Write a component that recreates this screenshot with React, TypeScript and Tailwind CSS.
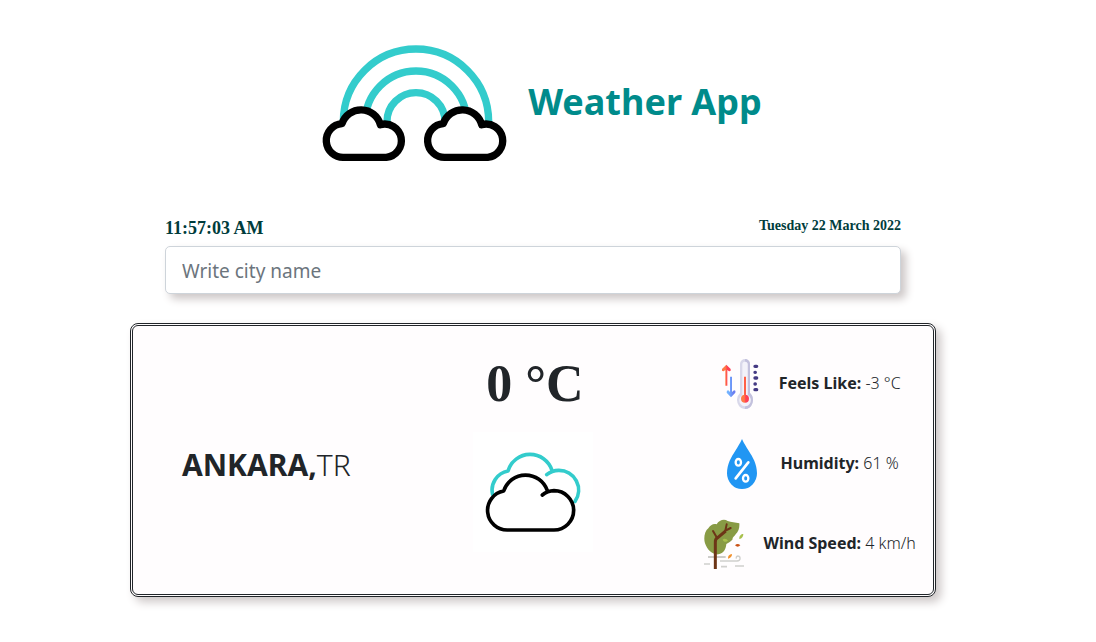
import type { ReactNode } from "react";

const miniCloud =
  "M100 382H226A50 50 0 1 0 208 284A60 60 0 0 0 93 281A50 50 0 0 0 100 382Z";

function RainbowLogo() {
  return (
    <svg className="size-[200px] shrink-0" viewBox="15 -81 600 600" fill="none" role="img" aria-label="Rainbow">
      <g stroke="#33cccc" strokeWidth="22">
        <path d="M97 290V275A218 218 0 0 1 533 275V290" />
        <path d="M163 275A152 152 0 0 1 467 275" />
        <path d="M228 290V275A87 87 0 0 1 402 275" />
      </g>
      <g stroke="#000" strokeWidth="22" strokeLinejoin="round" fill="#fff">
        <path d={miniCloud} />
        <path d={miniCloud} transform="translate(304 0)" />
      </g>
    </svg>
  );
}

function CloudsIcon() {
  return (
    <svg className="size-[120px] bg-white" viewBox="24 246 360 360" fill="none" strokeWidth="11" strokeLinecap="round" strokeLinejoin="round" role="img" aria-label="Cloudy">
      <g stroke="#33cccc">
        <path d="M83 434A58 58 0 0 1 129 363A69 69 0 0 1 261 361" />
        <path d="M245 374A59 59 0 0 1 281 361A59 59 0 0 1 330 454" />
      </g>
      <path
        stroke="#000"
        fill="#fff"
        d="M232 435A59 59 0 0 1 267 422A59 59 0 0 1 267 540H128A59 59 0 0 1 116 423A69 69 0 0 1 247 422"
      />
    </svg>
  );
}

function ThermometerIcon() {
  return (
    <svg className="size-[50px] shrink-0" viewBox="75 42 150 150" fill="none" aria-hidden="true">
      <defs>
        <linearGradient id="warm" x1="0" y1="0" x2="1" y2="0">
          <stop offset="0.4" stopColor="#ff7a45" />
          <stop offset="0.6" stopColor="#ff3f55" />
        </linearGradient>
        <linearGradient id="cool" x1="0" y1="0" x2="1" y2="0">
          <stop offset="0.2" stopColor="#73b4ff" />
          <stop offset="0.8" stopColor="#6a7cf0" />
        </linearGradient>
      </defs>
      <path fill="#d9d8ea" d="M150 57A15 15 0 0 1 180 57V144A24 27 0 1 1 150 144Z" />
      <path fill="#c3c1dd" d="M165 42A15 15 0 0 1 180 57V144A24 27 0 0 1 165 192V184A17 18 0 0 0 173 150V57A8 8 0 0 0 165 50Z" />
      <path fill="#f3f2fa" d="M157 58A8 8 0 0 1 173 58V150A17 18 0 1 1 157 150Z" />
      <path fill="#ff6048" d="M162 95H168V150H162Z" />
      <circle cx="165" cy="161" r="12" fill="url(#warm)" />
      <path fill="url(#warm)" d="M109 59L122 72Q124 80 117 79L112 75V122H106V75L101 79Q94 80 96 72Z" />
      <path fill="url(#cool)" d="M120 95H126V141L132 136Q138 136 136 143L123 157L110 143Q109 136 115 136L120 141Z" />
      <path stroke="#443a83" strokeWidth="10" strokeLinecap="round" d="M195 64H200M195 82H196M195 99H200M195 117H196M195 134H200" />
    </svg>
  );
}

function HumidityIcon() {
  return (
    <svg className="size-[50px] shrink-0" viewBox="78 42 150 150" fill="none" aria-hidden="true">
      <path fill="#2196f3" d="M153 42C159 55 166 66 173 77C185 96 198 116 198 145A45 47 0 0 1 108 145C108 116 121 96 133 77C140 66 147 55 153 42Z" />
      <g stroke="#fff" strokeWidth="7" strokeLinecap="round">
        <path strokeWidth="8" d="M172 112L134 160" />
        <ellipse cx="142" cy="112" rx="8" ry="10" />
        <ellipse cx="164" cy="160" rx="8" ry="10" />
      </g>
    </svg>
  );
}

function WindyTreeIcon() {
  return (
    <svg className="size-[50px] shrink-0" viewBox="24 42 150 150" fill="none" aria-hidden="true">
      <path
        fill="#889b45"
        d="M52 70C58 60 68 54 77 58C84 45 100 41 110 48C120 52 134 52 145 55C146 67 143 80 134 88C129 95 123 99 125 103C120 110 113 114 106 117C105 132 98 145 82 148C66 150 49 136 42 115C37 100 41 78 52 70Z"
      />
      <path fill="#a8c04c" d="M95 104C99 98 108 102 111 107C106 112 98 111 95 104ZM145 102C144 93 150 87 157 87C157 95 153 101 145 102Z" />
      <g stroke="#d0d0cd" strokeWidth="4">
        <path d="M51 156H104" stroke="#b5b5b0" />
        <path d="M39 177H57M90 185H108M132 183H159" strokeWidth="5" />
        <path d="M87 168H138C151 167 149 153 140 153Q135 154 136 161" />
      </g>
      <path stroke="#6d3517" strokeWidth="9" d="M73 192V112Q72 102 80 98L104 78" />
      <path stroke="#6d3517" strokeWidth="6" strokeLinecap="round" d="M66 78L77 97M107 58L103 77L119 69" />
      <path fill="#ca5317" d="M132 121Q140 113 148 121Q140 129 132 121Z" />
      <path fill="#f2912c" d="M111 161Q110 149 123 147Q123 158 111 161Z" />
    </svg>
  );
}

function Reading({ icon, label, value }: { icon: ReactNode; label: string; value: string }) {
  return (
    <li className="flex items-center justify-center gap-3.5">
      {icon}
      <p className="whitespace-nowrap pb-0.5 text-base leading-6 font-light">
        <strong className="font-bold">{label}:</strong> {value}
      </p>
    </li>
  );
}

export default function App() {
  return (
    <div className="min-h-screen bg-white pr-[30px] font-['Noto_Sans',sans-serif] text-[#212529]">
      <header className="flex items-center justify-center gap-3 pt-[3px] pl-3">
        <RainbowLogo />
        <h1 className="pb-0.5 text-[36px] leading-[48px] font-bold text-[#008b8b]">Weather App</h1>
      </header>

      <main className="mx-auto w-full max-w-[806px]">
        <section className="px-[35px] pt-[14px]">
          <div className="flex items-start justify-between font-['Liberation_Serif',serif] font-bold text-[#003c3c]">
            <time className="text-[18px] leading-[22px]">11:57:03 AM</time>
            <time className="text-[14px] leading-[17px]">Tuesday 22 March 2022</time>
          </div>
          <input
            type="text"
            aria-label="City name"
            placeholder="Write city name"
            className="mt-[7px] block h-12 w-full rounded-[5px] border border-[#ced4da] bg-white px-4 pt-0.5 text-[19px] shadow-[5px_5px_8px_#cdc7c7] outline-none placeholder:text-[#6c757d]"
          />
        </section>

        <section className="mt-[29px] grid grid-cols-3 items-center rounded-lg border-3 border-double border-[#212529] bg-[#fffdfe] pt-[33px] pb-[25px] shadow-[5px_5px_10px_#cdc7c7]">
          <h2 className="pt-0.5 text-center text-[30px] leading-9 font-light">
            <strong className="font-bold">ANKARA,</strong>TR
          </h2>
          <div className="flex flex-col items-center gap-6 self-start">
            <p className="pl-1 font-['Liberation_Serif',serif] text-[52px] leading-[49px] font-bold">0 °C</p>
            <CloudsIcon />
          </div>
          <ul className="flex flex-col gap-[30px] pl-4">
            <Reading icon={<ThermometerIcon />} label="Feels Like" value="-3 °C" />
            <Reading icon={<HumidityIcon />} label="Humidity" value="61 %" />
            <Reading icon={<WindyTreeIcon />} label="Wind Speed" value="4 km/h" />
          </ul>
        </section>
      </main>
    </div>
  );
}
